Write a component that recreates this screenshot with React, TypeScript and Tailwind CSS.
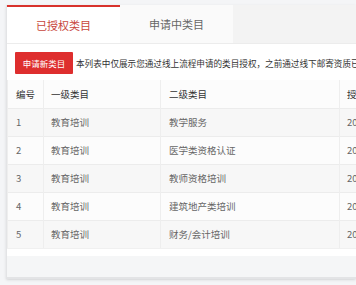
const rows = [
  { id: 1, first: "教育培训", second: "教学服务" },
  { id: 2, first: "教育培训", second: "医学类资格认证" },
  { id: 3, first: "教育培训", second: "教师资格培训" },
  { id: 4, first: "教育培训", second: "建筑地产类培训" },
  { id: 5, first: "教育培训", second: "财务/会计培训" },
];

export default function App() {
  return (
    <div
      className="w-[356px] h-[285px] overflow-hidden bg-[#f4f5f7] pl-[6px] pt-[5px]"
      style={{ fontFamily: '"Noto Sans CJK SC", "Noto Sans", sans-serif' }}
    >
      <div className="w-[350px] overflow-hidden bg-white border-l border-b-2 border-[#e3e4e6] shadow-sm">
        {/* tabs */}
        <div className="flex h-[38px] bg-[#f3f3f3]">
          <div className="w-[113px] flex items-center justify-center bg-white border-t-2 border-[#d8322c] text-[11px] text-[#c8463c]">
            已授权类目
          </div>
          <div className="w-[113px] flex items-center justify-center bg-[#fafafa] text-[11px] text-[#666]">
            申请中类目
          </div>
        </div>

        <div className="border-t border-[#ececec]">
          <div className="flex items-center gap-[3px] px-[8px] pt-[8px]">
            <button className="shrink-0 whitespace-nowrap h-[22px] w-[58px] bg-[#de2e2e] text-white text-[8.5px] rounded-[1px]">
              申请新类目
            </button>
            <span className="whitespace-nowrap text-[8.6px] text-[#333]">
              本列表中仅展示您通过线上流程申请的类目授权，之前通过线下邮寄资质已申请的类目请联系客服
            </span>
          </div>

          <table className="mt-[6px] w-[440px] table-fixed border-collapse text-[9.5px] text-left">
            <colgroup>
              <col className="w-[36px]" />
              <col className="w-[117px]" />
              <col className="w-[179px]" />
              <col className="w-[108px]" />
            </colgroup>
            <thead>
              <tr className="h-[28px] bg-[#fcfcfc] text-[#333]">
                <th className="pl-[8px] font-normal border-l border-[#eee]">编号</th>
                <th className="pl-[7px] font-normal border-l border-[#eee]">一级类目</th>
                <th className="pl-[8px] font-normal border-l border-[#eee]">二级类目</th>
                <th className="pl-[7px] font-normal border-l border-[#eee] whitespace-nowrap">授权时间</th>
              </tr>
            </thead>
            <tbody className="text-[#666]">
              {rows.map((r, i) => (
                <tr
                  key={r.id}
                  className={`h-[28px] border-t border-[#ececec] ${i % 2 === 0 ? "bg-[#f7f7f7]" : "bg-[#fcfcfc]"}`}
                >
                  <td className="pl-[8px] border-l border-[#eee]">{r.id}</td>
                  <td className="pl-[7px] border-l border-[#eee]">{r.first}</td>
                  <td className="pl-[8px] border-l border-[#eee]">{r.second}</td>
                  <td className="pl-[7px] border-l border-[#eee] whitespace-nowrap">2019-03-12</td>
                </tr>
              ))}
            </tbody>
          </table>

          <div className="h-[8px] bg-white border-t border-[#f0f0f0]" />
          <div className="h-[21px] bg-[#f5f6f7]" />
        </div>
      </div>
    </div>
  );
}
